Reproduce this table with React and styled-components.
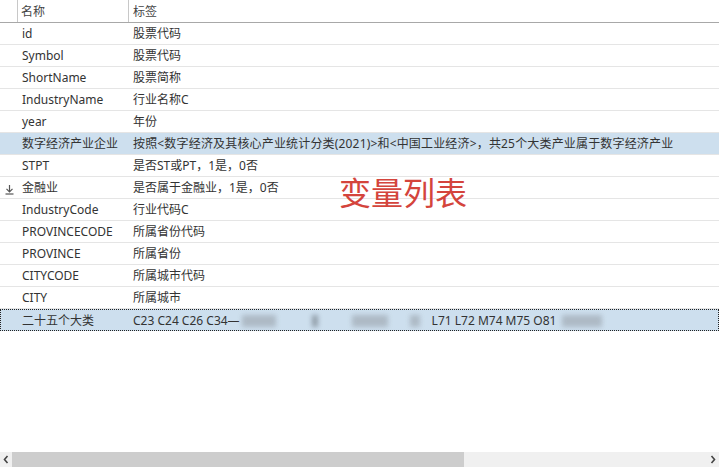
import React from "react";
import styled, { createGlobalStyle } from "styled-components";

const Global = createGlobalStyle`
  html, body { margin: 0; padding: 0; background: #fff; }
  body {
    font-family: "Noto Sans", "Noto Sans CJK SC", sans-serif;
    font-size: 12px;
    color: #333;
  }
`;

const Page = styled.div`
  position: relative;
  width: 719px;
  height: 468px;
  display: flex;
  flex-direction: column;
  overflow: hidden;
`;

const Header = styled.div`
  display: grid;
  grid-template-columns: 18px 111px 1fr;
  height: 23px;
  box-sizing: border-box;
  border-bottom: 1px solid #a8a8a8;
`;

const HeadCell = styled.div`
  display: flex;
  align-items: center;
  padding-left: ${(p) => p.$pad || 0}px;
  border-right: ${(p) => (p.$sep ? "1px solid #c8c8c8" : "none")};
  height: 22px;
  box-sizing: border-box;
  color: #444;
  font-family: "Noto Sans CJK SC", sans-serif;
  line-height: 1;
`;

const Row = styled.div`
  position: relative;
  display: grid;
  grid-template-columns: 129px 1fr;
  height: 22px;
  box-sizing: border-box;
  border-bottom: ${(p) => (p.$focus ? "none" : "1px solid #e5e5e5")};
  background: ${(p) => (p.$sel ? "#cddfee" : "#fff")};
  outline: ${(p) => (p.$focus ? "1px dotted #222" : "none")};
  outline-offset: -1px;
`;

const Cell = styled.div`
  display: flex;
  align-items: center;
  padding-left: ${(p) => p.$pad}px;
  padding-top: 1px;
  white-space: nowrap;
  overflow: visible;
  line-height: 1;
  color: #333;
  letter-spacing: ${(p) => p.$ls || 0}px;
`;

const IconSlot = styled.span`
  position: absolute;
  left: 4px;
  top: 5px;
  width: 11px;
  height: 11px;
`;

const Blur = styled.span`
  display: inline-block;
  width: ${(p) => p.$w}px;
  height: 12px;
  margin-left: ${(p) => p.$ml || 0}px;
  background: ${(p) => p.$c || "#aab6c1"};
  filter: blur(2.5px);
  opacity: 0.9;
  vertical-align: middle;
`;

const Note = styled.div`
  position: absolute;
  left: 339px;
  top: 171px;
  font-family: "Noto Sans CJK SC", sans-serif;
  font-size: 32px;
  color: #d4443c;
  line-height: 1.3;
`;

const Scrollbar = styled.div`
  margin-top: auto;
  margin-bottom: 1px;
  height: 15px;
  display: grid;
  grid-template-columns: 12px 1fr 12px;
  background: #f0f0f0;
  align-items: stretch;
`;

const Arrow = styled.div`
  display: flex;
  align-items: center;
  justify-content: center;
`;

const Track = styled.div`
  display: flex;
  align-items: stretch;
`;

const Thumb = styled.div`
  width: 452px;
  background: #cdcdcd;
`;

const rows = [
  ["id", "股票代码"],
  ["Symbol", "股票代码"],
  ["ShortName", "股票简称"],
  ["IndustryName", "行业名称C"],
  ["year", "年份"],
  ["数字经济产业企业", "按照<数字经济及其核心产业统计分类(2021)>和<中国工业经济>，共25个大类产业属于数字经济产业", "sel"],
  ["STPT", "是否ST或PT，1是，0否"],
  ["金融业", "是否属于金融业，1是，0否", "icon"],
  ["IndustryCode", "行业代码C"],
  ["PROVINCECODE", "所属省份代码"],
  ["PROVINCE", "所属省份"],
  ["CITYCODE", "所属城市代码"],
  ["CITY", "所属城市"],
];

const DownIcon = () => (
  <svg width="11" height="11" viewBox="0 0 11 11" fill="none" stroke="#555" strokeWidth="1.2">
    <path d="M5.5 1 V7.5" />
    <path d="M2.5 4.8 L5.5 7.8 L8.5 4.8" />
    <path d="M1.5 10 H9.5" />
  </svg>
);

const Chevron = ({ dir }) => (
  <svg width="6" height="9" viewBox="0 0 6 9" fill="none" stroke="#444" strokeWidth="1.6">
    {dir === "l" ? <path d="M4.5 1 L1.5 4.5 L4.5 8" /> : <path d="M1.5 1 L4.5 4.5 L1.5 8" />}
  </svg>
);

export default function App() {
  return (
    <>
      <Global />
      <Page>
        <Header>
          <HeadCell $sep />
          <HeadCell $sep $pad={3}>名称</HeadCell>
          <HeadCell $pad={4}>标签</HeadCell>
        </Header>
        {rows.map(([name, label, flag]) => (
          <Row key={name} $sel={flag === "sel"}>
            {flag === "icon" && (
              <IconSlot>
                <DownIcon />
              </IconSlot>
            )}
            <Cell $pad={22}>{name}</Cell>
            <Cell $pad={4} $ls={flag === "sel" ? 0.17 : 0}>{label}</Cell>
          </Row>
        ))}
        <Row $sel $focus>
          <Cell $pad={22}>二十五个大类</Cell>
          <Cell $pad={4}>
            C23 C24 C26 C34—
            <Blur $w={34} $ml={2} />
            <Blur $w={6} $ml={36} $c="#8a96a0" />
            <Blur $w={36} $ml={34} />
            <Blur $w={10} $ml={22} />
            <span style={{ marginLeft: 12 }}>L71 L72 M74 M75 O81</span>
            <Blur $w={40} $ml={6} />
          </Cell>
        </Row>
        <Note>变量列表</Note>
        <Scrollbar>
          <Arrow>
            <Chevron dir="l" />
          </Arrow>
          <Track>
            <Thumb />
          </Track>
          <Arrow>
            <Chevron dir="r" />
          </Arrow>
        </Scrollbar>
      </Page>
    </>
  );
}
